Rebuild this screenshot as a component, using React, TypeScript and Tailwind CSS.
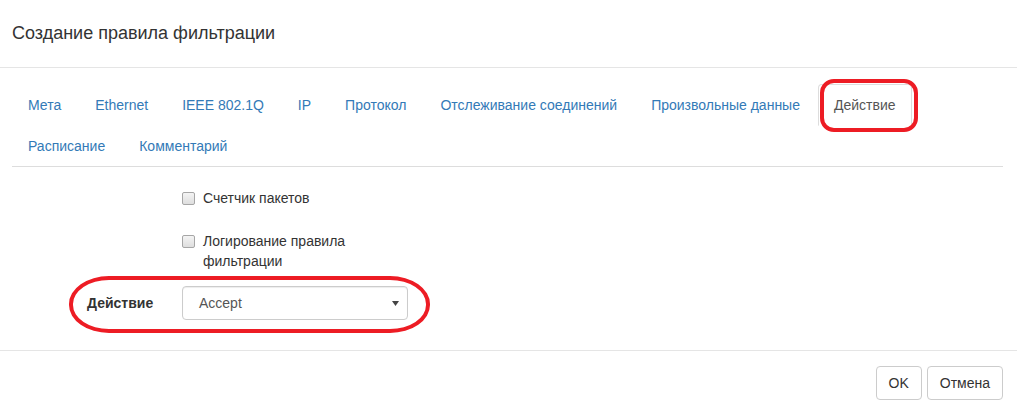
import React from 'react';

const tabs = [
  'Мета',
  'Ethernet',
  'IEEE 802.1Q',
  'IP',
  'Протокол',
  'Отслеживание соединений',
  'Произвольные данные',
  'Действие',
  'Расписание',
  'Комментарий',
];

function Checkbox({ label }: { label: string }) {
  return (
    <label className="flex items-start gap-[8px] text-[14px] leading-[20px] text-[#333]">
      <span className="mt-[4px] ml-0 h-[13px] w-[13px] shrink-0 rounded-[2px] border border-[#a6a6a6] bg-gradient-to-b from-[#f4f4f4] to-[#dedede]" />
      <span>{label}</span>
    </label>
  );
}

export default function App() {
  const active = 'Действие';
  return (
    <div
      className="relative h-[413px] w-[1017px] overflow-hidden bg-white text-[#333]"
      style={{ fontFamily: '"Liberation Sans", Arial, sans-serif' }}
    >
      {/* header */}
      <div className="border-b border-[#e5e5e5] px-[12px] pt-[20px] pb-[21px]">
        <h4 className="text-[18px] leading-[26px] text-[#333]">Создание правила фильтрации</h4>
      </div>

      {/* body */}
      <div className="h-[282px] pt-[16px] pl-[12px] pr-[14px]">
        <ul className="flex flex-wrap border-b border-[#ddd]">
          {tabs.map((t) => (
            <li key={t} className="-mb-px mr-[2px]">
              <a
                className={
                  t === active
                    ? 'block rounded-t-[4px] border border-[#ddd] border-b-transparent bg-white px-[15px] py-[10px] text-[14px] leading-[20px] text-[#555]'
                    : 'block border border-transparent px-[15px] py-[10px] text-[14px] leading-[20px] text-[#337ab7]'
                }
              >
                {t}
              </a>
            </li>
          ))}
        </ul>

        <div className="grid grid-cols-[95px_226px] pl-[75px] pt-[21px]">
          <div />
          <Checkbox label="Счетчик пакетов" />
          <div className="h-[23px]" />
          <div className="h-[23px]" />
          <div />
          <Checkbox label="Логирование правила фильтрации" />
          <div className="h-[15px]" />
          <div className="h-[15px]" />
          <div className="flex h-[34px] items-center text-[14px] font-bold text-[#333]">Действие</div>
          <div className="flex h-[34px] items-center justify-between rounded-[4px] border border-[#ccc] bg-white pl-[16px] pr-[8px] text-[14px] text-[#555] shadow-[inset_0_1px_1px_rgba(0,0,0,0.075)]">
            <span>Accept</span>
            <svg width="7" height="5" viewBox="0 0 7 5">
              <path d="M0 0 L7 0 L3.5 5 Z" fill="#444" />
            </svg>
          </div>
        </div>
      </div>

      {/* footer */}
      <div className="flex justify-end gap-[5px] border-t border-[#e5e5e5] pt-[15px] pr-[14px]">
        <button className="h-[34px] rounded-[4px] border border-[#ccc] bg-white px-[12px] text-[14px] text-[#333]">OK</button>
        <button className="h-[34px] rounded-[4px] border border-[#ccc] bg-white px-[12px] text-[14px] text-[#333]">Отмена</button>
      </div>

      {/* red annotations */}
      <div className="pointer-events-none absolute left-[820px] top-[79px] h-[53px] w-[98px] rounded-[14px] border-[4px] border-[#ed1c24]" />
      <div className="pointer-events-none absolute left-[69px] top-[276px] h-[57px] w-[361px] rounded-[40px/28px] border-[4px] border-[#ed1c24]" />
    </div>
  );
}
